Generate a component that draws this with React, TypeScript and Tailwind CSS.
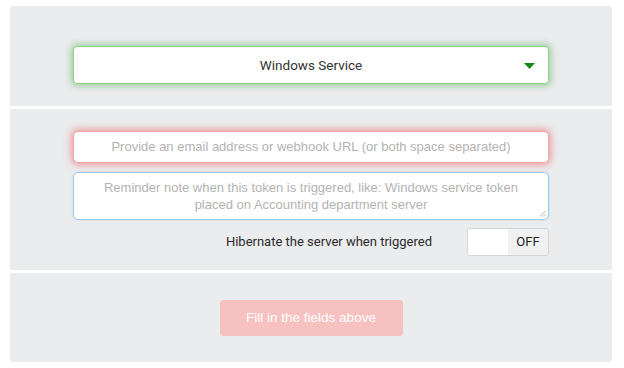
export default function App() {
  return (
    <div className="min-h-[368px] w-[624px] bg-white pl-[10px] pr-[12px] pt-[6px] font-['Roboto',sans-serif]">
      <div className="flex flex-col gap-[3px] overflow-hidden rounded-[3px]">
        {/* token type */}
        <section className="bg-[#ebecee] px-[63px] pb-[22px] pt-[40px]">
          <div className="relative flex h-[38px] items-center justify-center rounded-[4px] border border-[#8fcf88] bg-white shadow-[0_0_7px_2px_rgba(76,175,80,0.5)]">
            <span className="text-[13.5px] text-[#333]">Windows Service</span>
            <svg className="absolute right-[13px] top-[16px]" width="11" height="6" viewBox="0 0 11 6">
              <path d="M0 0h11L5.5 6z" fill="#178a17" />
            </svg>
          </div>
        </section>

        {/* details */}
        <section className="flex flex-col bg-[#ebecee] px-[63px] pb-[14px] pt-[22px]">
          <div className="flex h-[32px] items-center justify-center rounded-[5px] border border-[#f3a5a5] bg-white shadow-[0_0_7px_2px_rgba(240,80,80,0.5)]">
            <span className="font-['Liberation_Sans',sans-serif] text-[13px] text-[#b3b3b3]">
              Provide an email address or webhook URL (or both space separated)
            </span>
          </div>
          <div className="relative mt-[9px] flex h-[48px] items-center justify-center rounded-[5px] border border-[#9cc9ee] bg-white px-4 text-center font-['Liberation_Sans',sans-serif] text-[13px] leading-[17px] text-[#b3b3b3] shadow-[0_0_2px_rgba(100,160,230,0.35)]">
            <span>
              Reminder note when this token is triggered, like: Windows service token
              <br />
              placed on Accounting department server
            </span>
            <svg className="absolute bottom-[2px] right-[2px]" width="7" height="7" viewBox="0 0 7 7">
              <path d="M1 6.5L6.5 1M4 6.5L6.5 4" stroke="#999" strokeWidth="0.8" />
            </svg>
          </div>
          <div className="mt-[8px] flex items-center justify-end gap-[35px]">
            <span className="text-[13px] text-[#2a2a2a]">Hibernate the server when triggered</span>
            <div className="flex h-[28px] w-[82px] overflow-hidden rounded-[3px] border border-[#d4d4d4] bg-[#f1f1f1]">
              <div className="w-[40px] bg-white" />
              <div className="flex flex-1 items-center justify-center text-[13px] text-[#222]">OFF</div>
            </div>
          </div>
        </section>

        {/* submit */}
        <section className="flex justify-center bg-[#ebecee] pb-[26px] pt-[27px]">
          <button className="h-[36px] w-[183px] rounded-[3px] bg-[#f7c1c1] font-['Liberation_Sans',sans-serif] text-[13.5px] text-white">
            Fill in the fields above
          </button>
        </section>
      </div>
    </div>
  )
}
